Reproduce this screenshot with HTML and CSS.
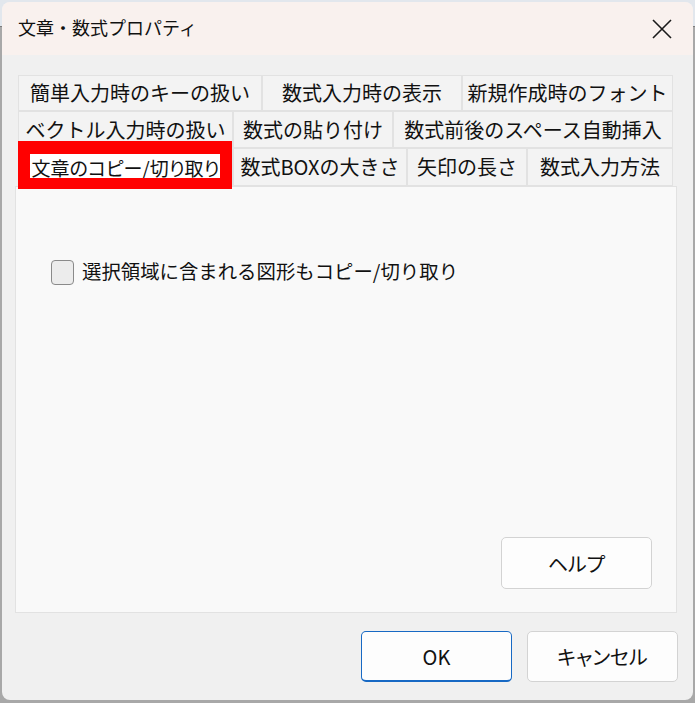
FILE: index.html
```html
<!DOCTYPE html>
<html lang="ja">
<head>
    <meta charset="UTF-8">
    <title>文章・数式プロパティ</title>
    <link rel="stylesheet" href="styles.css">
</head>
<body>
    <div class="window">
        <header class="titlebar">
            <span class="title">文章・数式プロパティ</span>
            <span class="close">
                <svg width="20" height="20" viewBox="0 0 20 20"><path d="M1 1L19 19M19 1L1 19" stroke="#1a1a1a" stroke-width="1.6" fill="none"/></svg>
            </span>
        </header>
        <main class="content">
            <div class="tabs">
                <div class="tab-row row-1">
                    <div class="tab">簡単入力時のキーの扱い</div>
                    <div class="tab">数式入力時の表示</div>
                    <div class="tab">新規作成時のフォント</div>
                </div>
                <div class="tab-row row-2">
                    <div class="tab">ベクトル入力時の扱い</div>
                    <div class="tab">数式の貼り付け</div>
                    <div class="tab">数式前後のスペース自動挿入</div>
                </div>
                <div class="tab-row row-3">
                    <div class="tab active">文章のコピー/切り取り</div>
                    <div class="tab">数式BOXの大きさ</div>
                    <div class="tab">矢印の長さ</div>
                    <div class="tab">数式入力方法</div>
                </div>
            </div>
            <div class="panel">
                <label class="check">
                    <span class="check-box"></span>
                    <span class="check-label">選択領域に含まれる図形もコピー/切り取り</span>
                </label>
                <div class="panel-foot">
                    <button class="btn">ヘルプ</button>
                </div>
            </div>
            <div class="actions">
                <button class="btn btn-primary">OK</button>
                <button class="btn">キャンセル</button>
            </div>
        </main>
    </div>
</body>
</html>
```

FILE: styles.css
```css
*,*::before,*::after{
    padding: 0;
    margin: 0;
    box-sizing: border-box;
}
body{
    width: 695px;
    height: 703px;
    overflow: hidden;
    background: linear-gradient(#e2e7ed 0 26px, #7d7d7d 26px 27px, #a8a8a8 27px);
    font-family: "Noto Sans CJK JP", sans-serif;
    color: #000;
    padding: 2px 2px 0 2px;
}
.window{
    width: 691px;
    height: 698px;
    border-radius: 8px;
    overflow: hidden;
    background-color: #f0f0f0;
    display: flex;
    flex-direction: column;
}
.titlebar{
    height: 53px;
    background-color: #f9f1ee;
    display: flex;
    justify-content: space-between;
    align-items: center;
    padding: 0 21px 3px 16px;
}
.title{
    font-size: 18px;
    color: #111;
}
.close{
    width: 20px;
    height: 20px;
    display: flex;
    margin-top: 3px;
}
.content{
    flex: 1;
    padding: 20px 16px 0 13px;
    display: flex;
    flex-direction: column;
}
.tabs{
    margin: 0 4px 0 3px;
}
.tab-row{
    display: grid;
    height: 37px;
}
.tab-row.row-1{
    height: 36px;
    grid-template-columns: 244px 200px 211px;
}
.tab-row.row-2{
    grid-template-columns: 215px 160px 280px;
}
.tab-row.row-3{
    height: 38px;
    grid-template-columns: 215px 174px 120px 146px;
}
.tab{
    font-size: 20px;
    line-height: 1;
    color: #111;
    background-color: #f3f3f3;
    border: 1px solid #e2e2e2;
    display: flex;
    align-items: center;
    justify-content: center;
    white-space: nowrap;
}
.tab.active{
    position: relative;
    z-index: 1;
    background-color: #fff;
    font-size: 19px;
    font-feature-settings: "palt";
    padding-top: 1px;
}
/* 注釈の赤枠 */
.tab.active::after{
    content: '';
    position: absolute;
    top: -8px;
    bottom: -4px;
    left: -1px;
    right: 0;
    border-style: solid;
    border-color: #ff0000;
    border-width: 13px 12px 11px 12px;
}
.panel{
    height: 427px;
    border: 1px solid #e2e2e2;
    background-color: #f9f9f9;
    display: flex;
    flex-direction: column;
    padding: 72px 24px 23px 35px;
}
.check{
    display: flex;
    align-items: center;
    gap: 8px;
}
.check-box{
    width: 23px;
    height: 25px;
    border: 1px solid #8a8a8a;
    border-radius: 4px;
    background-color: #ececec;
}
.check-label{
    font-size: 19.4px;
    color: #111;
    margin-top: -3px;
}
.panel-foot{
    margin-top: auto;
    display: flex;
    justify-content: flex-end;
}
.btn{
    width: 151px;
    height: 52px;
    font-family: "Noto Sans CJK JP", sans-serif;
    font-size: 20px;
    color: #111;
    background-color: #fdfdfd;
    border: 1px solid #d3d3d3;
    border-radius: 5px;
    font-feature-settings: "palt";
}
.btn-primary{
    border: 1px solid #1769c4;
    border-bottom-width: 2px;
}
.actions{
    margin-top: 18px;
    margin-right: -1px;
    display: flex;
    justify-content: flex-end;
    gap: 15px;
}
.actions .btn{
    height: 51px;
}
```
